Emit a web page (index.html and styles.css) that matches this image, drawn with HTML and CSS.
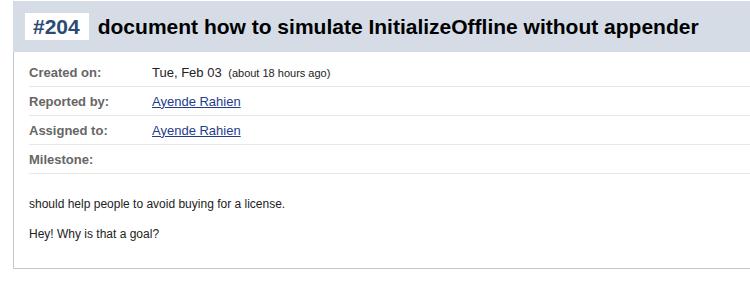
FILE: index.html
```html
<!DOCTYPE html>
<html lang="en">
<head>
    <meta charset="UTF-8">
    <title>#204 document how to simulate InitializeOffline without appender</title>
    <link rel="stylesheet" href="styles.css">
</head>
<body>
    <div class="ticket">
        <h1 class="ticket-title">
            <span class="ticket-num">#204</span>
            <span>document how to simulate InitializeOffline without appender</span>
        </h1>
        <div class="ticket-body">
            <table class="props">
                <tr>
                    <th>Created on:</th>
                    <td>Tue, Feb 03 <span class="ago">(about 18 hours ago)</span></td>
                </tr>
                <tr>
                    <th>Reported by:</th>
                    <td><a href="#">Ayende Rahien</a></td>
                </tr>
                <tr>
                    <th>Assigned to:</th>
                    <td><a href="#">Ayende Rahien</a></td>
                </tr>
                <tr>
                    <th>Milestone:</th>
                    <td></td>
                </tr>
            </table>
            <div class="description">
                <p>should help people to avoid buying for a license.</p>
                <p>Hey! Why is that a goal?</p>
            </div>
        </div>
    </div>
</body>
</html>
```

FILE: styles.css
```css
body { margin: 0; font-family: "Liberation Sans", Arial, sans-serif; color: #222; overflow-x: hidden; }
.ticket { margin: 1px 0 0 13px; }
.ticket-title { display: flex; align-items: center; gap: 9px; height: 51px; margin: 0; padding: 0 12px; background: #d5dce6; font-size: 21px; color: #000; }
.ticket-num { background: #fff; color: #2b4a76; padding: 2px 9px 2px 8px; line-height: 23px; }
.ticket-body { border-left: 1px solid #bfc7d3; border-bottom: 1px solid #bfc7d3; padding: 6px 0 26px 15px; }
.props { border-collapse: collapse; width: 100%; font-size: 13px; }
.props th, .props td { height: 28px; padding: 0; border-bottom: 1px solid #e8e8e8; text-align: left; vertical-align: middle; }
.props th { width: 123px; color: #666; }
.props a { color: #1f3d8c; }
.ago { font-size: 11px; margin-left: 3px; }
.description { padding-top: 22px; font-size: 12px; line-height: 16px; color: #222; }
.description p { margin: 0 0 14px; }
.description p:last-child { margin-bottom: 0; }
```
